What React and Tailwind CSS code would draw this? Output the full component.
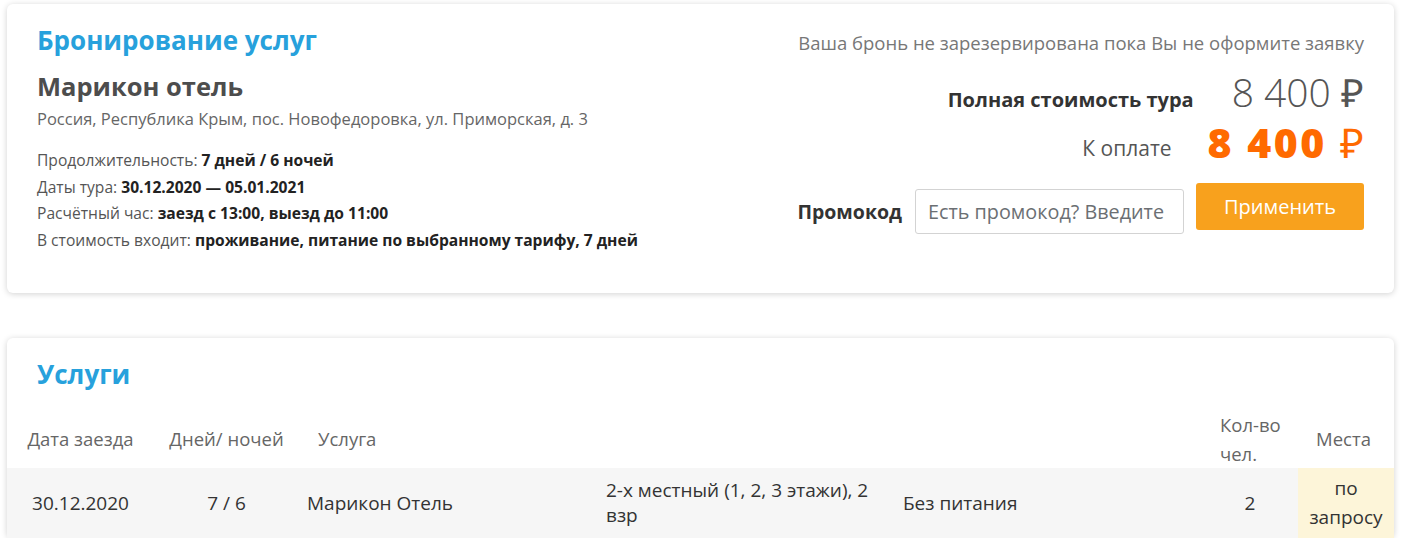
export default function App() {
  return (
    <div className="min-h-screen bg-white px-[7px] pt-[4px] font-['Open_Sans',sans-serif] text-[#444]">
      {/* Booking card */}
      <div className="h-[289px] rounded-md bg-white shadow-[0_1px_6px_rgba(0,0,0,0.18)] px-[30px] pt-[20px] flex justify-between">
        <div>
          <h1 className="text-[26px] leading-[32px] font-bold text-[#27a1dc]">Бронирование услуг</h1>
          <h2 className="mt-[13px] text-[25.5px] leading-[34px] font-bold text-[#4d4d4d]">Марикон отель</h2>
          <p className="mt-[6px] text-[16.5px] leading-[20px] text-[#666]">
            Россия, Республика Крым, пос. Новофедоровка, ул. Приморская, д. 3
          </p>
          <div className="mt-[18px] text-[15.6px] leading-[26.5px] text-[#555]">
            <p>Продолжительность: <b className="text-[#222]">7 дней / 6 ночей</b></p>
            <p>Даты тура: <b className="text-[#222]">30.12.2020 — 05.01.2021</b></p>
            <p>Расчётный час: <b className="text-[#222]">заезд с 13:00, выезд до 11:00</b></p>
            <p>В стоимость входит: <b className="text-[#222]">проживание, питание по выбранному тарифу, 7 дней</b></p>
          </div>
        </div>

        <div className="flex flex-col items-end pt-[7px]">
          <p className="text-[18.5px] leading-[24px] text-[#777]">Ваша бронь не зарезервирована пока Вы не оформите заявку</p>
          <div className="mt-[17px] flex items-end gap-[38px]">
            <span className="text-[20px] leading-[24px] font-bold text-[#333] mb-[0px]">Полная стоимость тура</span>
            <span className="text-[39px] leading-[40px] font-light text-[#555]">8 400 ₽</span>
          </div>
          <div className="mt-[10px] flex items-end gap-[36px]">
            <span className="text-[21px] leading-[26px] text-[#555] mb-[1px]">К оплате</span>
            <span className="text-[41px] leading-[40px] font-extrabold tracking-[2.5px] text-[#ff6a00]">
              8 400 <span className="font-normal tracking-normal">₽</span>
            </span>
          </div>
          <div className="mt-[21px] flex items-start">
            <span className="mt-[6px] h-[45px] flex items-center text-[19.5px] font-bold text-[#333] mr-[13px]">Промокод</span>
            <input
              className="w-[269px] h-[45px] mt-[6px] border border-[#d3d3d3] rounded-[3px] px-[12px] text-[19.8px] text-[#555] placeholder:text-[#6b6f73] outline-none"
              placeholder="Есть промокод? Введите"
            />
            <button className="ml-[12px] w-[168px] h-[47px] rounded-[3px] bg-[#f8a11d] text-white text-[20px]">
              Применить
            </button>
          </div>
        </div>
      </div>

      {/* Services card */}
      <div className="mt-[45px] rounded-md bg-white shadow-[0_1px_6px_rgba(0,0,0,0.18)] pt-[20px]">
        <h2 className="px-[30px] text-[26px] leading-[32px] font-bold text-[#27a1dc]">Услуги</h2>
        <table className="mt-[20px] w-full table-fixed text-[18.5px] text-[#666]">
          <colgroup>
            <col className="w-[147px]" />
            <col className="w-[145px]" />
            <col className="w-[298px]" />
            <col className="w-[298px]" />
            <col />
            <col className="w-[90px]" />
            <col className="w-[96px]" />
          </colgroup>
          <thead>
            <tr className="h-[58px]">
              <th className="font-normal text-center">Дата заезда</th>
              <th className="font-normal text-center">Дней/ ночей</th>
              <th className="font-normal text-left pl-[19px]">Услуга</th>
              <th></th>
              <th></th>
              <th className="font-normal text-left leading-[29px] pl-[12px]">Кол-во<br />чел.</th>
              <th className="font-normal text-center pr-[5px]">Места</th>
            </tr>
          </thead>
          <tbody>
            <tr className="h-[70px] bg-[#f6f6f6] text-[19px] text-[#333]">
              <td className="text-center">30.12.2020</td>
              <td className="text-center">7 / 6</td>
              <td className="pl-[8px]">Марикон Отель</td>
              <td className="pl-[9px] leading-[25px] pr-[20px]">2-х местный (1, 2, 3 этажи), 2 взр</td>
              <td className="pl-[8px]">Без питания</td>
              <td className="text-center pr-[6px]">2</td>
              <td className="text-center bg-[#fdf5d9] leading-[29px]">по<br />запросу</td>
            </tr>
          </tbody>
        </table>
      </div>
    </div>
  );
}
